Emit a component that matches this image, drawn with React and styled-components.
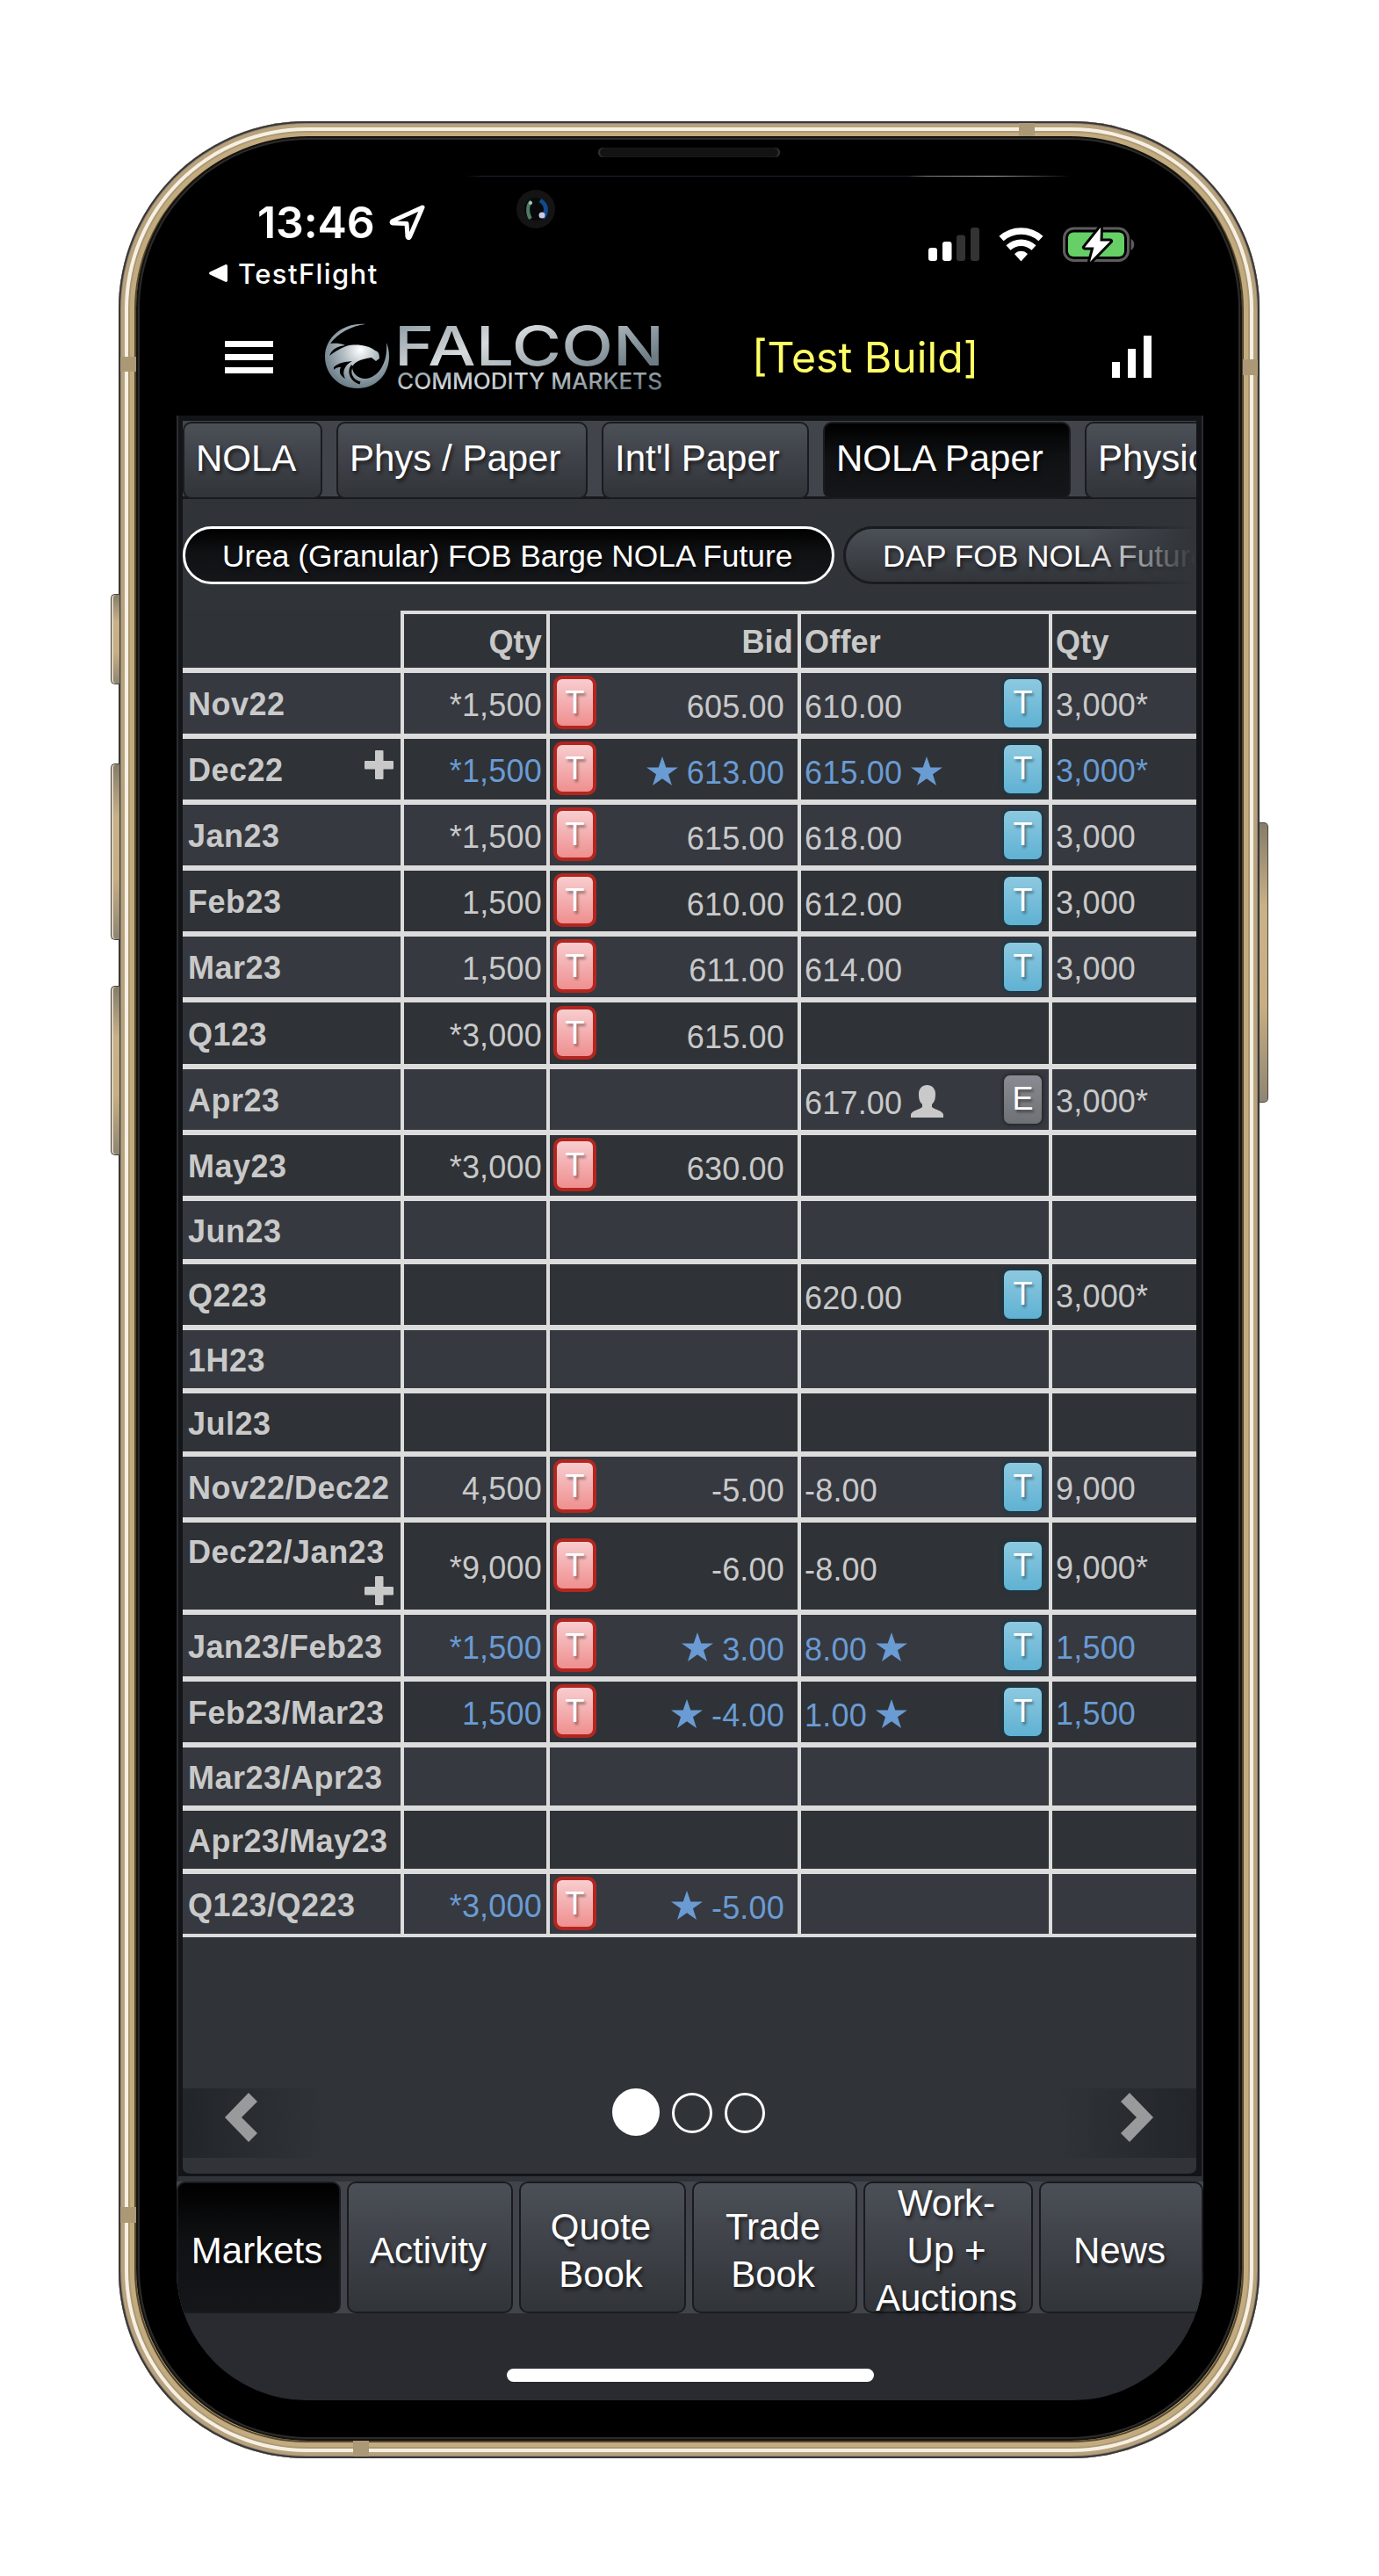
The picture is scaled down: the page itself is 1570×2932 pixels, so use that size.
import React from 'react'
import styled, { createGlobalStyle, css } from 'styled-components'

const GlobalStyle = createGlobalStyle`
  * {
    box-sizing: border-box;
  }

  body {
    margin: 0;
    background: #fff;
  }
`

/* ---------- phone body ---------- */

const Page = styled.main`
  width: 1570px;
  height: 2932px;
  padding: 138px 136px 134px 135px;
  background: #fff;
  overflow: hidden;
`

const Phone = styled.div`
  position: relative;
  height: 2660px;
  padding: 21px 24px 24px;
  border-radius: 214px;
  background: #c3ab80;
  box-shadow:
    inset 0 0 0 2px #38383b,
    inset 0 0 0 3px #8c8272,
    inset 0 0 0 7px #b8a27c,
    inset 0 0 0 11px #f6f0e4,
    inset 0 0 0 13px #ab9873,
    inset 0 0 0 18px #c3ab80,
    inset 0 0 0 20px #57492f;
`

const SideButton = styled.div`
  position: absolute;
  top: ${({ $top }) => $top}px;
  height: ${({ $height }) => $height}px;
  width: 10px;
  border: 1px solid #4b4536;
  background: linear-gradient(#857c6a, #c9b188 30%, #c8ae82 65%, #8f8573);
  ${({ $side }) => $side === 'left' ? css`
    left: -9px;
    border-right: 0;
    border-radius: 5px 0 0 5px;
    box-shadow: inset 2px 0 0 #d9d3c4;
  ` : css`
    right: -10px;
    border-left: 0;
    border-radius: 0 5px 5px 0;
  `}
`

const Antenna = styled.div`
  position: absolute;
  background: #ab9875;
  ${({ $area }) => $area}
`

const Glass = styled.div`
  position: relative;
  display: flex;
  flex-direction: column;
  height: 2615px;
  padding: 0 40px 42px 42px;
  border-radius: 192px;
  background: #000;
  box-shadow: 0 0 0 2px #2c2b29, 0 0 0 4px #15130f;
`

const Speaker = styled.div`
  position: absolute;
  top: 9px;
  left: 522px;
  width: 207px;
  height: 11px;
  border-radius: 6px;
  background: #131313;
  box-shadow: inset 2px 0 1px #333, inset -2px 0 1px #333;
`

const Glare = styled.div`
  position: absolute;
  top: 41px;
  left: 369px;
  width: 692px;
  height: 1px;
  background: linear-gradient(90deg, transparent, #1b2230 3%, #1b2230 73%, #77777a 76%, #aaa 87%, transparent);
`

const Camera = styled.svg`
  position: absolute;
  top: 57px;
  left: 429px;
`

/* ---------- status bar and header ---------- */

const StatusBar = styled.div`
  display: flex;
  justify-content: space-between;
  flex: none;
  height: 196px;
  padding: 74px 78px 0 37px;
  color: #fff;
  font-family: Inter, 'Liberation Sans', sans-serif;
`

const StatusLine = styled.div`
  display: flex;
  align-items: center;
  height: ${({ $height }) => $height}px;
`

const Clock = styled(StatusLine)`
  margin: 0 0 20px 55px;
  gap: 16px;
  font-size: 50px;
  font-weight: 600;
  letter-spacing: -.1px;
`

const BackLink = styled(StatusLine)`
  gap: 12px;
  font-size: 31px;
  font-weight: 500;
  letter-spacing: 1.4px;
`

const StatusIcons = styled.div`
  padding-top: 25px;
`

const Header = styled.header`
  display: flex;
  align-items: center;
  flex: none;
  height: 102px;
  margin-bottom: 16px;
  padding-left: 55px;
`

const Burger = styled.div`
  display: flex;
  flex-direction: column;
  gap: 8px;
  width: 55px;
  margin-right: 59px;

  span {
    height: 7px;
    background: #fff;
  }
`

const BuildName = styled.h1`
  width: 410px;
  margin: 0 0 0 102px;
  color: #ffff66;
  font: 400 48.200px Inter, 'Liberation Sans', sans-serif;
  white-space: nowrap;
`

/* ---------- markets panel ---------- */

const Screen = styled.div`
  display: flex;
  flex-direction: column;
  flex: 1;
  overflow: hidden;
  border-radius: 0 0 148px 148px;
  background: #292b30;
  font-family: 'Liberation Sans', Arial, sans-serif;
`

const Panel = styled.section`
  flex: none;
  height: 2010px;
  padding: 6px 6px 0 5px;
  border: solid #2a2c30;
  border-width: 0 2px;
  background: #121417;
  box-shadow: inset 0 -6px 0 #303338;
`

const PanelBody = styled.div`
  height: 1998px;
  overflow: hidden;
  border-bottom: 3px solid #121417;
  border-radius: 0 0 9px 9px;
  background: #303338;
`

const keyColors = css`
  border: 2px solid #1a1b1f;
  background: ${({ $active }) => $active
    ? 'linear-gradient(#000, #101113 45%, #151619)'
    : 'linear-gradient(#4b5057, #42454c 35%, #313438)'};
  color: #fff;
  text-shadow: 2px 3px 4px rgba(0, 0, 0, .6);
`

const Tabs = styled.nav`
  display: flex;
  gap: 16px;
  width: 1154px;
  height: 89px;
  padding-top: 1px;
  overflow: hidden;
  background: linear-gradient(#41454b 86px, #17181b 86px);
`

const Tab = styled.div`
  ${keyColors}
  flex: none;
  width: ${({ $width }) => $width}px;
  height: 88px;
  padding-left: 13px;
  border-radius: 10px;
  font-size: 42px;
  line-height: 80px;
  white-space: nowrap;
`

const Pills = styled.div`
  position: relative;
  display: flex;
  gap: 10px;
  width: 1154px;
  margin: 31px 0 30px;
  overflow: hidden;

  &::after {
    content: '';
    position: absolute;
    inset: 0 0 0 auto;
    width: 125px;
    background: linear-gradient(90deg, transparent, #303338);
  }
`

const Pill = styled.div`
  ${keyColors}
  flex: none;
  height: 66px;
  width: ${({ $width }) => $width}px;
  padding-left: 42px;
  border-width: 3px;
  border-color: ${({ $active }) => $active ? '#fff' : '#1a1b1f'};
  border-radius: 33px;
  font-size: 35.300px;
  line-height: 61px;
  white-space: nowrap;
`

/* ---------- quotes table ---------- */

const Table = styled.div`
  width: 1154px;
  color: #c9c9c9;
  font-size: 36px;
  letter-spacing: .2px;
  line-height: 40px;
  border-bottom: 4px solid #dcdcdc;
`

const Row = styled.div`
  display: grid;
  grid-template-columns: 248px 166px 286px 286px 168px;
  height: ${({ $height }) => $height}px;
  border-top: 6px solid #dcdcdc;
  background: #2f3236;

  &:nth-child(even) {
    background: #363940;
  }
`

const HeadRow = styled(Row)`
  border-top: 0;
  font-weight: bold;
`

const Cell = styled.div`
  display: flex;
  align-items: center;
  justify-content: ${({ $right }) => $right ? 'flex-end' : 'flex-start'};
  padding: 0 5px 0 4px;
  border-left: 4px solid #dcdcdc;
  color: ${({ $best }) => $best ? '#6a9bd3' : 'inherit'};
  white-space: nowrap;
`

const HeadCell = styled(Cell)`
  border-top: 4px solid #dcdcdc;
  padding-top: 2px;
`

const QtyCell = styled(Cell)`
  padding-top: 5px;
`

const PriceCell = styled(Cell)`
  justify-content: space-between;
  padding: 0 ${({ $bid }) => $bid ? '15px 0 4px' : '8px 0 4px'};
`

const Price = styled.div`
  display: flex;
  align-items: center;
  gap: 10px;
  margin-left: ${({ $bid }) => $bid ? 'auto' : '0'};
  padding-top: 9px;

  svg {
    margin-bottom: 6px;
  }
`

const Month = styled.div`
  display: flex;
  flex-wrap: wrap;
  align-items: center;
  align-content: center;
  justify-content: space-between;
  row-gap: 7px;
  padding: ${({ $tall }) => $tall ? 8 : 3}px 8px 0 6px;
  font-weight: bold;
  letter-spacing: .5px;

  svg {
    margin: 0 0 ${({ $tall }) => $tall ? 0 : 14}px auto;
  }
`

const badgeColors = {
  red: css`
    width: 49px;
    height: 61px;
    margin-bottom: 2px;
    border: 4px solid #b3261f;
    border-radius: 10px;
    background: linear-gradient(#f8cdcf, #ef8f8f);
    line-height: 53px;
  `,
  blue: css`
    background: linear-gradient(#8dc9e0, #5fb1d3);
    box-shadow: 0 0 4px 1px #0f3b4d;
  `,
  gray: css`
    background: linear-gradient(#8a8c93, #6d7074);
    box-shadow: 0 0 4px 1px #222;
  `,
}

const Badge = styled.div`
  width: 43px;
  height: 55px;
  border-radius: 7px;
  color: #fff;
  text-align: center;
  text-shadow: 2px 3px 3px rgba(0, 0, 0, .4);
  line-height: 53px;
  ${({ $color }) => badgeColors[$color]}
`

/* ---------- pager and bottom navigation ---------- */

const Pager = styled.div`
  display: flex;
  align-items: flex-start;
  justify-content: space-between;
  height: 79px;
  margin-top: 172px;
  padding: 0 49px 0 48px;
  background:
    linear-gradient(90deg, #222529, transparent) left / 160px no-repeat,
    linear-gradient(270deg, #222529, transparent) right / 160px no-repeat;

  > svg {
    margin-top: 5px;
  }
`

const Dots = styled.div`
  display: flex;
  align-items: center;
  gap: 14px;
  padding-right: 1px;
`

const Dot = styled.div`
  width: ${({ $on }) => $on ? 54 : 46}px;
  height: ${({ $on }) => $on ? 54 : 46}px;
  margin-top: ${({ $on }) => $on ? 0 : 2}px;
  border: 3px solid #fff;
  border-radius: 50%;
  background: ${({ $on }) => $on ? '#fff' : 'transparent'};
`

const BottomNav = styled.nav`
  display: flex;
  gap: 7px;
  flex: none;
  height: 150px;
  background: #41454b;
`

const NavItem = styled.div`
  ${keyColors}
  display: flex;
  align-items: center;
  justify-content: center;
  flex: none;
  width: ${({ $width }) => $width}px;
  padding-top: 7px;
  padding-right: 4px;
  border-radius: 10px;
  font-size: 42px;
  line-height: 54px;
  text-align: center;
  white-space: pre;
`

const HomeIndicator = styled.div`
  flex: none;
  width: 418px;
  height: 15px;
  margin: 63px 0 0 376px;
  border-radius: 8px;
  background: #fff;
`

/* ---------- drawings ---------- */

const Star = () => (
  <svg width="36" height="33" viewBox="0 0 36 33" fill="#6a9bd3">
    <path d="M18 0l4.3 12.4H36L25 20.3 29 33l-11-7.8L7 33l4-12.7L0 12.4h13.7z" />
  </svg>
)

const Person = () => (
  <svg width="37" height="37" viewBox="0 0 37 37" fill="#c9c9c9">
    <path d="M18.500 0C24 0 28 4 28 10c0 6-1 9-4 12v3c3 3 12 4 13 8.500V37H0v-3.500C1 29 10 28 13 25v-3c-3-3-4-6-4-12C9 4 13 0 18.500 0z" />
  </svg>
)

const Plus = () => (
  <svg width="33" height="33" viewBox="0 0 33 33" fill="#c9c9c9">
    <rect x="12" width="9.500" height="33" rx="1" />
    <rect y="12" width="33" height="9.500" rx="1" />
  </svg>
)

const Chevron = ({ flip }) => (
  <svg width="37" height="56" viewBox="0 0 37 56" fill="#999a9c">
    <path
      d="M27 0l10 10-18 18 18 18-10 10L0 28z"
      transform={flip ? 'matrix(-1 0 0 1 37 0)' : undefined}
    />
  </svg>
)

const LogoSvg = styled.svg`
  overflow: visible;
`

const Logo = () => (
  <LogoSvg width="384" height="74" viewBox="0 0 384 74">
    <defs>
      <linearGradient id="steel" x1="0" y1="0" x2="1" y2=".6">
        <stop offset="0" stopColor="#7f8f98" />
        <stop offset=".45" stopColor="#d6dadd" />
        <stop offset="1" stopColor="#6d7d86" />
      </linearGradient>
      <radialGradient id="head" cx=".55" cy=".4" r=".6">
        <stop offset="0" stopColor="#fff" />
        <stop offset=".45" stopColor="#b3bec4" />
        <stop offset="1" stopColor="#6d7f89" />
      </radialGradient>
    </defs>
    <path
      fill="url(#head)"
      d="M46 0C22-2 0 14 0 37c0 20 16 36 37 36s36-16 36-36c0-6-1-11-3-16 2 24-10 40-24 41-8 0-15-6-15-13 2-6 9-9 22-11l5 4 4-3c0-5-1-8-5-9-7-6-22-8-33-5-8 3-14 7-19 11 3-8 9-11 18-12-8-3-13-2-17-2C15 10 30 2 46 0z"
    />
    <path d="M10 49c5-5 12-6 21-7-9 5-12 12-8 20-7-4-7-9-5-13-3 0-5 0-8 3z" />
    <path d="M31 47c-5 8-1 17 9 20" fill="none" stroke="#000" strokeWidth="3" />
    <g fill="url(#steel)" fontFamily="Inter, sans-serif">
      <text x="79" y="47" fontSize="62" fontWeight="500" textLength="307" lengthAdjust="spacingAndGlyphs">FALCON</text>
      <text x="82" y="74" fontSize="25" fontWeight="500" textLength="302" lengthAdjust="spacingAndGlyphs">COMMODITY MARKETS</text>
    </g>
  </LogoSvg>
)

const LocationArrow = () => (
  <svg width="42" height="40" viewBox="0 0 42 40" fill="none" stroke="#fff" strokeWidth="5" strokeLinejoin="round">
    <path d="M38 3L4 18.500c-1.500 1 -1 2.500 .5 2.500L20 21.500l1 15c.5 1.500 2 1.500 2.500 0z" />
  </svg>
)

const BackArrow = () => (
  <svg width="21" height="20" viewBox="0 0 21 20" fill="#fff">
    <path d="M18 .5c2-1 3 0 3 1.500v16c0 1.500-1 2.500-3 1.500L1 11.500c-1.300-.8-1.300-2.200 0-3z" />
  </svg>
)

const StatusGlyphs = () => (
  <svg width="235" height="42" viewBox="0 0 235 42">
    <g fill="#fff">
      <rect x="0" y="24" width="10" height="15" rx="3" />
      <rect x="16" y="17" width="10.500" height="22" rx="3" />
      <rect x="32" y="9.500" width="10" height="29.500" rx="3" fill="#333" />
      <rect x="48" y="1" width="10" height="38" rx="3" fill="#333" />
      <path d="M105.500 39.500l-7.500-8.500c4-4.500 11-4.500 15 0z" />
    </g>
    <g fill="none" stroke="#fff" strokeWidth="7.500">
      <path d="M83 13.500c12.500-11.500 32.500-11.500 45 0" />
      <path d="M91 24c8.500-7.700 20.500-7.700 29 0" />
    </g>
    <rect x="154.500" y="2" width="73" height="36.500" rx="11" fill="none" stroke="#5c5c5e" strokeWidth="3" />
    <path d="M230.500 14c5 2 5 10.500 0 13z" fill="#5c5c5e" />
    <rect x="159" y="6.500" width="64" height="27.500" rx="6" fill="#66cf66" />
    <path
      d="M196 1l-18 22.500h10.500L184 40l23-23.500h-11.500z"
      fill="#fff"
      stroke="#000"
      strokeWidth="6"
      strokeLinejoin="round"
      paintOrder="stroke"
    />
  </svg>
)

const ChartIcon = () => (
  <svg width="45" height="48" viewBox="0 0 45 48" fill="#fff">
    <rect y="30" width="9" height="18" />
    <rect x="18" y="15" width="9" height="33" />
    <rect x="36" width="9" height="48" />
  </svg>
)

/* ---------- data ---------- */

const tabs = [
  { name: 'NOLA', width: 159 },
  { name: 'Phys / Paper', width: 286 },
  { name: "Int'l Paper", width: 236 },
  { name: 'NOLA Paper', width: 282, active: true },
  { name: 'Physical', width: 220 },
]

// bid / offer: [qty, price, badge color, badge letter]
const quotes = [
  { month: 'Nov22', height: 75, bid: ['*1,500', '605.00'], offer: ['3,000*', '610.00'] },
  { month: 'Dec22', height: 75, plus: true, best: true, bid: ['*1,500', '613.00'], offer: ['3,000*', '615.00'] },
  { month: 'Jan23', height: 75, bid: ['*1,500', '615.00'], offer: ['3,000', '618.00'] },
  { month: 'Feb23', height: 75, bid: ['1,500', '610.00'], offer: ['3,000', '612.00'] },
  { month: 'Mar23', height: 75, bid: ['1,500', '611.00'], offer: ['3,000', '614.00'] },
  { month: 'Q123', height: 76, bid: ['*3,000', '615.00'] },
  { month: 'Apr23', height: 75, mine: true, offer: ['3,000*', '617.00', 'gray', 'E'] },
  { month: 'May23', height: 75, bid: ['*3,000', '630.00'] },
  { month: 'Jun23', height: 72 },
  { month: 'Q223', height: 75, offer: ['3,000*', '620.00'] },
  { month: '1H23', height: 72 },
  { month: 'Jul23', height: 72 },
  { month: 'Nov22/Dec22', height: 75, bid: ['4,500', '-5.00'], offer: ['9,000', '-8.00'] },
  { month: 'Dec22/Jan23', height: 105, plus: true, tall: true, bid: ['*9,000', '-6.00'], offer: ['9,000*', '-8.00'] },
  { month: 'Jan23/Feb23', height: 76, best: true, bid: ['*1,500', '3.00'], offer: ['1,500', '8.00'] },
  { month: 'Feb23/Mar23', height: 75, best: true, bid: ['1,500', '-4.00'], offer: ['1,500', '1.00'] },
  { month: 'Mar23/Apr23', height: 72 },
  { month: 'Apr23/May23', height: 72 },
  { month: 'Q123/Q223', height: 74, best: true, bid: ['*3,000', '-5.00'] },
]

const navItems = [
  { name: 'Markets', width: 187, active: true },
  { name: 'Activity', width: 189 },
  { name: 'Quote\nBook', width: 190 },
  { name: 'Trade\nBook', width: 188 },
  { name: 'Work-\nUp +\nAuctions', width: 193 },
  { name: 'News', width: 187 },
]

const QuoteRow = ({ month, height, plus, tall, best, mine, bid, offer }) => (
  <Row $height={height}>
    <Month $tall={tall}>
      <span>{month}</span>
      {plus && <Plus />}
    </Month>
    <QtyCell $right $best={best}>{bid && bid[0]}</QtyCell>
    <PriceCell $bid $best={best}>
      {bid && (
        <>
          <Badge $color="red">T</Badge>
          <Price $bid>
            {best && <Star />}
            {bid[1]}
          </Price>
        </>
      )}
    </PriceCell>
    <PriceCell $best={best}>
      {offer && (
        <>
          <Price>
            {offer[1]}
            {best && <Star />}
            {mine && <Person />}
          </Price>
          <Badge $color={offer[2] || 'blue'}>{offer[3] || 'T'}</Badge>
        </>
      )}
    </PriceCell>
    <QtyCell $best={best}>{offer && offer[0]}</QtyCell>
  </Row>
)

const App = () => {
  return (
    <Page>
      <GlobalStyle />
      <Phone>
        <SideButton $side="left" $top={538} $height={103} />
        <SideButton $side="left" $top={731} $height={201} />
        <SideButton $side="left" $top={984} $height={193} />
        <SideButton $side="right" $top={798} $height={319} />
        <Antenna $area="top: 2px; left: 1025px; width: 18px; height: 16px;" />
        <Antenna $area="top: 268px; left: 2px; width: 18px; height: 17px;" />
        <Antenna $area="top: 271px; right: 2px; width: 17px; height: 18px;" />
        <Antenna $area="top: 2374px; left: 2px; width: 19px; height: 18px;" />
        <Antenna $area="bottom: 2px; left: 267px; width: 18px; height: 18px;" />
        <Glass>
          <Speaker />
          <Glare />
          <Camera width="44" height="44" viewBox="0 0 44 44">
            <circle cx="22" cy="22" r="22" fill="#141414" />
            <circle cx="22" cy="22" r="13" fill="#08090b" />
            <path d="M17 13c-5 4-5 14-1 20" fill="none" stroke="#4f7a66" strokeWidth="4" />
            <path d="M27 12c8 5 8 13 3 20" fill="none" stroke="#114a8c" strokeWidth="5" />
            <circle cx="29" cy="29" r="3.500" fill="#c9cbe6" />
            <circle cx="16" cy="15" r="2" fill="#a8c9ba" />
          </Camera>

          <StatusBar>
            <div>
              <Clock $height={40}>13:46 <LocationArrow /></Clock>
              <BackLink $height={36}><BackArrow /> TestFlight</BackLink>
            </div>
            <StatusIcons>
              <StatusGlyphs />
            </StatusIcons>
          </StatusBar>

          <Header>
            <Burger><span /><span /><span /></Burger>
            <Logo />
            <BuildName>[Test Build]</BuildName>
            <ChartIcon />
          </Header>

          <Screen>
            <Panel>
              <PanelBody>
                <Tabs>
                  {tabs.map(({ name, width, active }) => (
                    <Tab key={name} $width={width} $active={active}>{name}</Tab>
                  ))}
                </Tabs>
                <Pills>
                  <Pill $active $width={742}>Urea (Granular) FOB Barge NOLA Future</Pill>
                  <Pill $width={500}>DAP FOB NOLA Future</Pill>
                </Pills>
                <Table>
                  <HeadRow $height={65}>
                    <div />
                    <HeadCell $right>Qty</HeadCell>
                    <HeadCell $right>Bid</HeadCell>
                    <HeadCell>Offer</HeadCell>
                    <HeadCell>Qty</HeadCell>
                  </HeadRow>
                  {quotes.map(quote => <QuoteRow key={quote.month} {...quote} />)}
                </Table>
                <Pager>
                  <Chevron />
                  <Dots>
                    <Dot $on />
                    <Dot />
                    <Dot />
                  </Dots>
                  <Chevron flip />
                </Pager>
              </PanelBody>
            </Panel>
            <BottomNav>
              {navItems.map(({ name, width, active }) => (
                <NavItem key={name} $width={width} $active={active}>{name}</NavItem>
              ))}
            </BottomNav>
            <HomeIndicator />
          </Screen>
        </Glass>
      </Phone>
    </Page>
  )
}

export default App
